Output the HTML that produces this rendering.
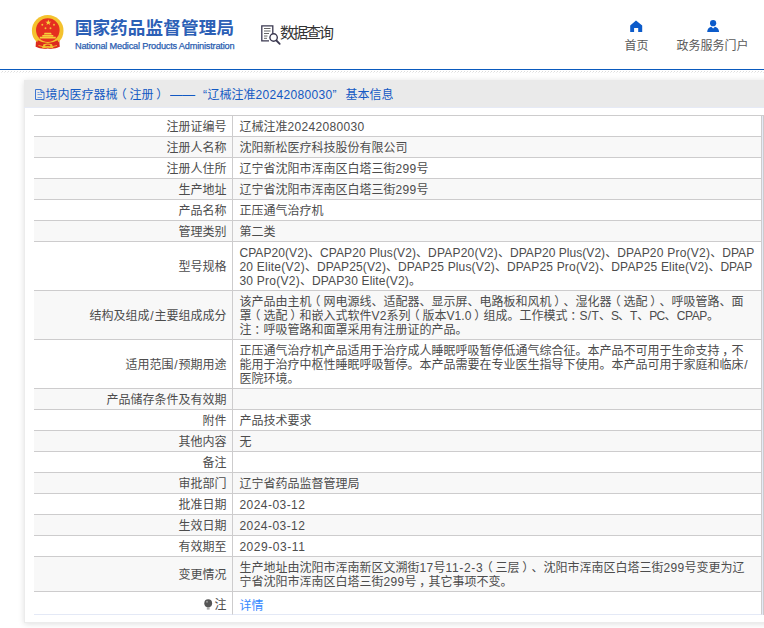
<!DOCTYPE html>
<html lang="zh-CN">
<head>
<meta charset="utf-8">
<title>国家药品监督管理局 数据查询</title>
<style>
*{box-sizing:border-box;margin:0;padding:0}
html,body{width:764px;height:628px;overflow:hidden;background:#fff}
body{position:relative;text-spacing-trim:space-all;font-family:"Liberation Sans","Noto Sans CJK SC",sans-serif;font-size:12px;color:#333}
.abs{position:absolute}
#logo{left:31px;top:14px;width:34px;height:36px}
#tcn{left:74.700px;top:14.400px;font-size:17.6px;font-weight:bold;color:#2c60b6;line-height:28px;white-space:nowrap;letter-spacing:.12px}
#ten{-webkit-text-stroke:.25px #2a5db0;left:75px;top:39.800px;font-size:9.200px;letter-spacing:-0.190px;color:#2a5db0;line-height:12px;white-space:nowrap}
#sicon{left:260px;top:24px;width:24px;height:22px}
#stext{left:280px;top:22.300px;font-size:15px;line-height:22px;color:#333;letter-spacing:-2px;white-space:nowrap}
.nav{font-size:12px;color:#5a5a5a;line-height:14px;white-space:nowrap;text-align:center}
#n1{left:606.500px;width:60px;top:39.400px}
#n2{left:672.500px;width:80px;top:39.400px}
#home{left:629px;top:20px;width:14px;height:13px}
#user{left:706px;top:19px;width:14px;height:14px}
#bline{left:0;top:69px;width:764px;height:1px;background:#0a5abe}
#hatch{left:0;top:71px;width:764px;height:3px}
#card{left:24px;top:80px;width:760px;height:543px;background:#fff;border:1px solid #ececec;box-shadow:0 1px 6px rgba(0,0,0,.13)}
#chead{left:-1px;top:-1px;width:760px;height:28px;background:#eaeaea;border-bottom:1px solid #e6eaf6}
#ctitle{left:10px;width:400px;height:16px;top:6.300px;line-height:16px;color:#1259c3;white-space:nowrap;font-size:12px}
#cicon{left:10px;top:8px;width:10px;height:11px}
table{position:absolute;left:34px;top:115px;width:728px;border-collapse:separate;border-spacing:0;border-top:1px solid #cdcccd;table-layout:fixed}
td{border-bottom:1px solid #cdcccd;border-right:1px solid #cdcccd;padding:4px 6px 2px 6.400px;line-height:14px;font-size:12px;vertical-align:middle;white-space:nowrap;color:#4c4c4c}
td.k{width:199px;text-align:right;padding-right:5.500px}
tr.last td{padding-top:5px;padding-bottom:1px;border-bottom-color:#e4e9f6}
tr.g td{background:#f8f8f8}
.pl{position:relative;left:-2.800px}.pr{position:relative;left:2.800px}.pc{position:relative;left:2.800px}
a{color:#3388ff;text-decoration:none}
#rl1{left:762px;top:116px;width:1px;height:499px;background:#e4e9f6}
#rl2{left:763px;top:115px;width:1px;height:500px;background:#cdcccd}
#rl3{left:762px;top:115px;width:1px;height:1px;background:#cdcccd}
</style>
</head>
<body>
<svg id="logo" class="abs" viewBox="0 0 34 36">
  <path d="M5.200 24 L4.600 32.800 Q10 35.600 16.800 34.600 Q23.500 35.600 28.700 32.800 L28.200 24 Z" fill="#dc2a1e"/>
  <circle cx="16.700" cy="16.700" r="15.800" fill="#f4c22e"/>
  <path d="M6.800 26.300 L5 32.500 Q10 34.800 16.800 34 Q23.500 34.800 28.400 32.500 L26.700 26.300 Q16.800 31.800 6.800 26.300Z" fill="#dc2a1e"/>
  <circle cx="16.800" cy="16.100" r="11.800" fill="#e53020"/>
  <path d="M17.300 5.600l.75 2.100h2.200l-1.800 1.300.7 2.100-1.850-1.300-1.850 1.300.7-2.100-1.800-1.300h2.200z" fill="#f7d43a"/>
  <circle cx="11.300" cy="10.800" r=".95" fill="#f2c434"/><circle cx="23" cy="10.800" r=".95" fill="#f2c434"/>
  <circle cx="14.500" cy="14.300" r=".95" fill="#f2c434"/><circle cx="19.500" cy="14.300" r=".95" fill="#f2c434"/>
  <path d="M12.800 20.600h8l-.8-1.800h-6.400zM11.300 22.400h11v-1.400h-11zM8.800 24.600h16v-1.800h-16z" fill="#f6cf3a"/>
  <path d="M12.500 30.200 Q16.800 28.600 21 30.200 L22.500 34.300 Q16.800 33.200 11 34.300Z" fill="#f2c030"/><path d="M7.500 31.500 Q12 33.500 16.800 32.300 Q21.500 33.500 26 31.500" stroke="#f2c030" stroke-width=".9" fill="none"/>
  <path d="M14.300 31 Q16.800 30.200 19.300 31 L19.100 32.300 Q16.800 31.700 14.500 32.300Z" fill="#dc2a1e"/>
</svg>
<div id="tcn" class="abs">国家药品监督管理局</div>
<div id="ten" class="abs">National Medical Products Administration</div>

<svg id="sicon" class="abs" viewBox="0 0 24 22" fill="none" stroke="#3a3850">
  <path d="M9 16.800H1.800V1.800h11v8" stroke-width="1.300"/>
  <path d="M4 4.500h6.500M4 7h6.500M4 9.500h5M4 12h3.500M4 14.300h3" stroke-width="1" stroke="#666"/>
  <circle cx="13.600" cy="13.500" r="3.700" stroke-width="1.400"/>
  <path d="M16.400 16.500l3.300 3.300" stroke-width="1.800" stroke-linecap="round"/>
</svg>
<div id="stext" class="abs">数据查询</div>

<svg id="home" class="abs" viewBox="0 0 14 13"><path d="M7 .6 L13.200 5.600V12H9.200V8.100H5.100V12H1.200V5.600Z" fill="#0c5bca"/></svg>
<div id="n1" class="abs nav">首页</div>
<svg id="user" class="abs" viewBox="0 0 14 14"><circle cx="7.100" cy="4.200" r="3.100" fill="#0c5bca"/><path d="M1.200 13 Q1.400 8.800 5.200 7.800 L7.100 9.600 L9 7.800 Q12.800 8.800 13.100 13Z" fill="#0c5bca"/></svg>
<div id="n2" class="abs nav">政务服务门户</div>

<div id="bline" class="abs"></div>
<svg id="hatch" class="abs" viewBox="0 0 764 3" shape-rendering="crispEdges">
  <defs><pattern id="hp" width="3" height="3" patternUnits="userSpaceOnUse">
    <rect x="2" y="0" width="1" height="1" fill="#dcdcdc"/><rect x="1" y="1" width="1" height="1" fill="#ececec"/>
  </pattern></defs>
  <rect width="764" height="3" fill="url(#hp)"/>
</svg>

<div id="card" class="abs">
  <div id="chead" class="abs"></div>
  <svg id="cicon" class="abs" viewBox="0 0 10 11" fill="none" stroke="#2a69cf" stroke-width=".9"><path d="M.5.500h5.500l3 3v7h-8.500zM6 .500v3h3"/><path d="M2.500 3.500h2M2.500 5.500h4.500M2.500 8.500h4.500" stroke="#6b98e0"/></svg>
  <div id="ctitle" class="abs"><span class="abs" style="left:10.500px">境内医疗器械<span class="pl">（</span>注册<span class="pr">）</span></span><span class="abs" style="left:134.700px;transform:scaleX(1.05);transform-origin:0 0">——</span><span class="abs" style="left:168px">“</span><span class="abs" style="left:172.500px">辽械注准<span style="letter-spacing:0.325px">20242080030</span>”</span><span class="abs" style="left:310.500px">基本信息</span></div>
</div>

<table>
<tr><td class="k">注册证编号</td><td>辽械注准<span style="letter-spacing:0.325px">20242080030</span></td></tr>
<tr class="g"><td class="k">注册人名称</td><td>沈阳新松医疗科技股份有限公司</td></tr>
<tr><td class="k">注册人住所</td><td>辽宁省沈阳市浑南区白塔三街<span style="letter-spacing:0.323px">299</span>号</td></tr>
<tr class="g"><td class="k">生产地址</td><td>辽宁省沈阳市浑南区白塔三街<span style="letter-spacing:0.323px">299</span>号</td></tr>
<tr><td class="k">产品名称</td><td>正压通气治疗机</td></tr>
<tr class="g"><td class="k">管理类别</td><td>第二类</td></tr>
<tr><td class="k">型号规格</td><td><span class="l" id="m1"><span style="letter-spacing:0.079px">CPAP20(V2)</span>、<span style="letter-spacing:0.101px">CPAP20 Plus(V2)</span>、<span style="letter-spacing:0.209px">DPAP20(V2)</span>、<span style="letter-spacing:0.048px">DPAP20 Plus(V2)</span>、<span style="letter-spacing:0.228px">DPAP20 Pro(V2)</span>、<span style="letter-spacing:0.051px">DPAP</span></span><br><span class="l" id="m2"><span style="letter-spacing:0.233px">20 Elite(V2)</span>、<span style="letter-spacing:0.129px">DPAP25(V2)</span>、<span style="letter-spacing:0.161px">DPAP25 Plus(V2)</span>、<span style="letter-spacing:0.178px">DPAP25 Pro(V2)</span>、<span style="letter-spacing:0.163px">DPAP25 Elite(V2)</span>、<span style="letter-spacing:0.051px">DPAP</span></span><br><span class="l" id="m3"><span style="letter-spacing:0.247px">30 Pro(V2)</span>、<span style="letter-spacing:0.163px">DPAP30 Elite(V2)</span>。</span></td></tr>
<tr class="g"><td class="k">结构及组成<span style="display:inline-block;width:5.000px;text-align:center">/</span>主要组成成分</td><td><span class="l" id="s1">该产品由主机<span class="pl">（</span>网电源线、适配器、显示屏、电路板和风机<span class="pr">）</span>、湿化器<span class="pl">（</span>选配<span class="pr">）</span>、呼吸管路、面</span><br><span class="l" id="s2">罩<span class="pl">（</span>选配<span class="pr">）</span>和嵌入式软件<span style="letter-spacing:0.156px">V2</span>系列<span class="pl">（</span>版本<span style="letter-spacing:0.078px">V1.0</span><span class="pr">）</span>组成。工作模式<span class="pc">：</span><span style="letter-spacing:0.276px">S/T</span>、<span style="letter-spacing:-1.216px">S</span>、<span style="display:inline-block;width:7.400px;text-align:center">T</span>、<span style="letter-spacing:-0.686px">PC</span>、<span style="letter-spacing:-0.349px">CPAP</span>。</span><br><span class="l" id="s3">注<span class="pc">：</span>呼吸管路和面罩采用有注册证的产品。</span></td></tr>
<tr><td class="k">适用范围<span style="display:inline-block;width:5.000px;text-align:center">/</span>预期用途</td><td><span class="l" id="u1">正压通气治疗机产品适用于治疗成人睡眠呼吸暂停低通气综合征。本产品不可用于生命支持<span class="pc">，</span>不</span><br><span class="l" id="u2">能用于治疗中枢性睡眠呼吸暂停。本产品需要在专业医生指导下使用。本产品可用于家庭和临床<span style="display:inline-block;width:5.000px;text-align:center">/</span></span><br><span class="l" id="u3">医院环境。</span></td></tr>
<tr class="g"><td class="k">产品储存条件及有效期</td><td></td></tr>
<tr><td class="k">附件</td><td>产品技术要求</td></tr>
<tr class="g"><td class="k">其他内容</td><td>无</td></tr>
<tr><td class="k">备注</td><td></td></tr>
<tr class="g"><td class="k">审批部门</td><td>辽宁省药品监督管理局</td></tr>
<tr><td class="k">批准日期</td><td><span style="letter-spacing:0.461px">2024-03-12</span></td></tr>
<tr class="g"><td class="k">生效日期</td><td><span style="letter-spacing:0.461px">2024-03-12</span></td></tr>
<tr><td class="k">有效期至</td><td><span style="letter-spacing:0.550px">2029-03-11</span></td></tr>
<tr class="g"><td class="k">变更情况</td><td><span class="l" id="c1">生产地址由沈阳市浑南新区文溯街<span style="letter-spacing:0.320px">17</span>号<span style="letter-spacing:0.701px">11-2-3</span><span class="pl">（</span>三层<span class="pr">）</span>、沈阳市浑南区白塔三街<span style="letter-spacing:0.323px">299</span>号变更为辽</span><br><span class="l" id="c2">宁省沈阳市浑南区白塔三街<span style="letter-spacing:0.323px">299</span>号<span class="pc">，</span>其它事项不变。</span></td></tr>
<tr class="last"><td class="k" style="height:23px"><svg width="9" height="11" viewBox="0 0 9 11" style="vertical-align:-1px;margin-right:1.500px"><circle cx="4.200" cy="4.200" r="3.900" fill="#555"/><rect x="2.800" y="8" width="2.800" height="2.600" fill="#aaa"/><circle cx="3" cy="2.800" r="1" fill="#999"/></svg>注</td><td style="padding-top:6px;padding-bottom:0"><a>详情</a></td></tr>
</table>
<div id="rl1" class="abs"></div>
<div id="rl2" class="abs"></div>
<div id="rl3" class="abs"></div>
</body>
</html>
